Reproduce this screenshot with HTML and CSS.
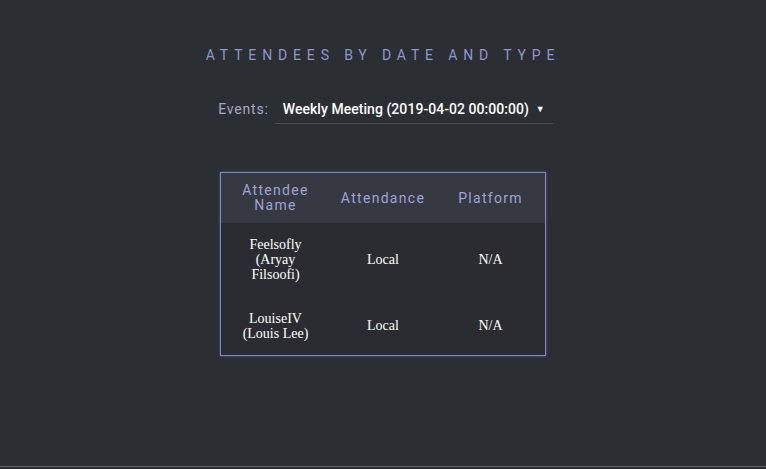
FILE: index.html
```html
<!DOCTYPE html>
<html>
<head>
<meta charset="utf-8">
<link rel="stylesheet" href="styles.css">
</head>
<body>
<div class="page">
  <h1 class="title">Attendees by date and type</h1>
  <div class="events">
    <span class="events-label">Events:</span>
    <div class="select">
      <span class="select-value">Weekly Meeting (2019-04-02 00:00:00)</span>
      <span class="select-arrow">&#9660;</span>
    </div>
  </div>
  <table class="grid">
    <thead>
      <tr>
        <th class="c1">Attendee Name</th>
        <th class="c2">Attendance</th>
        <th class="c3">Platform</th>
      </tr>
    </thead>
    <tbody>
      <tr class="r1">
        <td>Feelsofly (Aryay Filsoofi)</td>
        <td>Local</td>
        <td>N/A</td>
      </tr>
      <tr class="r2">
        <td>LouiseIV (Louis Lee)</td>
        <td>Local</td>
        <td>N/A</td>
      </tr>
    </tbody>
  </table>
</div>
<div class="footer"></div>
</body>
</html>
```

FILE: styles.css
```css
html, body {
  margin: 0;
  padding: 0;
  height: 100%;
  background: #2b2e33;
}
body {
  display: flex;
  flex-direction: column;
  overflow: hidden;
}
.page {
  flex: 1;
  display: flex;
  flex-direction: column;
  align-items: center;
  padding-top: 46px;
}
.title {
  margin: 0;
  font-family: Roboto, "Liberation Sans", sans-serif;
  font-weight: 400;
  font-size: 14px;
  line-height: 18px;
  letter-spacing: 5.85px;
  text-transform: uppercase;
  color: #8f98cc;
}
.events {
  display: flex;
  align-items: flex-start;
  margin-top: 36px;
  margin-left: 5px;
  gap: 6px;
}
.events-label {
  font-family: Roboto, "Liberation Sans", sans-serif;
  font-size: 14px;
  line-height: 18px;
  letter-spacing: 0.8px;
  color: #a3a8c8;
}
.select {
  display: flex;
  align-items: center;
  width: 270px;
  padding: 0 0 5px 8px;
  border-bottom: 1px solid #4c5058;
  font-family: Roboto, "Liberation Sans", sans-serif;
}
.select-value {
  font-size: 14px;
  line-height: 18px;
  font-weight: 500;
  letter-spacing: 0.05px;
  color: #ffffff;
  flex: 1;
}
.select-arrow {
  font-size: 9px;
  color: #ffffff;
  margin-right: 8px;
}
.grid {
  margin-top: 48px;
  border-collapse: collapse;
  border: 1px solid #7c8ac6;
  box-shadow: 0 0 3px rgba(124, 138, 198, 0.5);
}
.grid th {
  background: #363842;
  font-family: Roboto, "Liberation Sans", sans-serif;
  font-weight: 400;
  font-size: 14px;
  line-height: 15px;
  letter-spacing: 1.3px;
  color: #9ea4d4;
  padding: 10px 6px;
  height: 29px;
  text-align: center;
}
.grid .c1 { width: 97px; }
.grid .c2 { width: 94px; }
.grid .c3 { width: 97px; }
.grid td {
  font-family: "Liberation Serif", serif;
  font-size: 14px;
  line-height: 15px;
  color: #ffffff;
  text-align: center;
  padding: 0 20px;
  background: #2a2c31;
}
.grid .r1 td { height: 73px; }
.grid .r2 td { height: 59px; }
.footer {
  height: 2px;
  border-top: 1px solid #5d6168;
  background: #2b2e33;
}
```
